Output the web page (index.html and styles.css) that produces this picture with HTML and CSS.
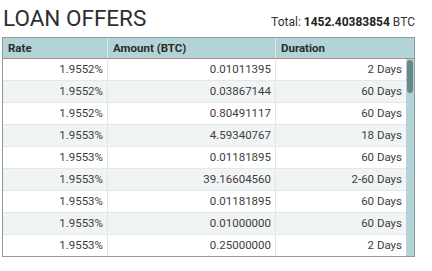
FILE: index.html
```
<!DOCTYPE html>
<html>
<head>
<meta charset="utf-8">
<link rel="stylesheet" href="styles.css">
</head>
<body>
<div class="top">
  <h1 class="title">LOAN OFFERS</h1>
  <div class="total">Total: <b>1452.40383854</b> BTC</div>
</div>
<div class="panel">
  <div class="thead">
    <div class="th">Rate</div>
    <div class="th">Amount (BTC)</div>
    <div class="th last">Duration</div>
  </div>
  <div class="body">
    <div class="rows">
      <div class="row"><div class="td">1.9552%</div><div class="td">0.01011395</div><div class="td last">2 Days</div></div>
      <div class="row"><div class="td">1.9552%</div><div class="td">0.03867144</div><div class="td last">60 Days</div></div>
      <div class="row"><div class="td">1.9552%</div><div class="td">0.80491117</div><div class="td last">60 Days</div></div>
      <div class="row"><div class="td">1.9553%</div><div class="td">4.59340767</div><div class="td last">18 Days</div></div>
      <div class="row"><div class="td">1.9553%</div><div class="td">0.01181895</div><div class="td last">60 Days</div></div>
      <div class="row"><div class="td">1.9553%</div><div class="td">39.16604560</div><div class="td last">2-60 Days</div></div>
      <div class="row"><div class="td">1.9553%</div><div class="td">0.01181895</div><div class="td last">60 Days</div></div>
      <div class="row"><div class="td">1.9553%</div><div class="td">0.01000000</div><div class="td last">60 Days</div></div>
      <div class="row"><div class="td">1.9553%</div><div class="td">0.25000000</div><div class="td last">2 Days</div></div>
    </div>
    <div class="scroll"><div class="thumb"></div></div>
  </div>
</div>
</body>
</html>
```
FILE: styles.css
```
* { box-sizing: border-box; }
body {
  margin: 0;
  background: #fff;
  font-family: Roboto, "Liberation Sans", sans-serif;
  color: #3d3d3d;
}
.top {
  height: 37px;
  display: flex;
  justify-content: space-between;
  align-items: baseline;
  padding: 4px 17px 0 3px;
}
.title {
  margin: 0;
  font-size: 22.5px;
  font-weight: 400;
  color: #2e2e2e;
  line-height: 28px;
}
.total {
  font-size: 12px;
  color: #333;
}
.total b { font-weight: 700; color: #222; }
.panel {
  margin-left: 2px;
  width: 413px;
  border: 1px solid #8e9c9c;
  background: #b3d4d6;
}
.thead {
  display: grid;
  grid-template-columns: 105px 168px 1fr;
  height: 21px;
  border-bottom: 1px solid #b88383;
}
.th {
  font-size: 11.5px;
  font-weight: 700;
  color: #2b2b2b;
  padding: 0 5px;
  line-height: 20px;
  border-right: 1px solid #d6e8e9;
}
.th.last { border-right: none; }
.body {
  display: flex;
}
.rows {
  width: 403px;
  background: #fff;
}
.row {
  display: grid;
  grid-template-columns: 105px 168px 1fr;
  height: 22px;
  border-bottom: 1px solid #e2e8e8;
}
.row:nth-child(even) { background: #f1f4f4; }
.row:last-child { border-bottom: none; height: 21px; }
.td {
  font-size: 11.5px;
  text-align: right;
  padding: 0 4px;
  line-height: 21px;
  border-right: 1px solid #e2e8e8;
}
.td.last { border-right: none; }
.scroll {
  flex: 1;
  padding: 1px 1px 0 1px;
}
.thumb {
  width: 6px;
  height: 33px;
  border-radius: 3px;
  background: #668a8c;
}
```
